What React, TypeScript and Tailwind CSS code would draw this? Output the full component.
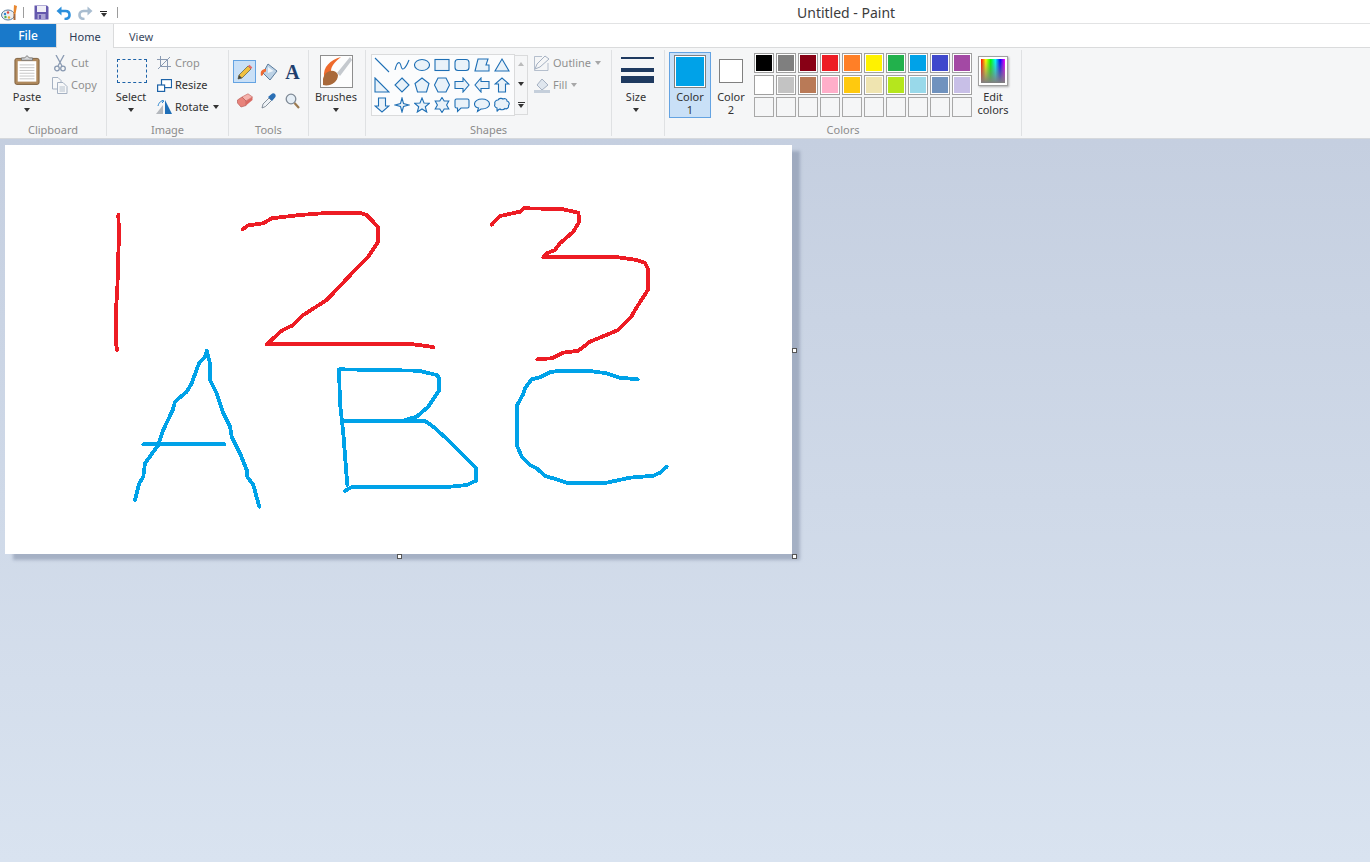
import type { ReactNode } from 'react'

const RED_STROKES = [
  '118.3,215 119,233 117.3,290 115.7,313 115.7,343 117.3,350',
  '242.7,229.3 248.3,225.3 263.3,223.3 271.7,218.3 300,215 330,212.7 360,212.7 366.7,215 378.3,227.3 378.3,241.7 368.3,256.7 356.7,268.3 326.7,300 303.3,315 293.3,325 281.7,330.7 266.7,344.3 413.3,344.3 433.3,347',
  '491.7,224.7 500,216 520,211.7 524,208.3 561.7,209 578.3,212.7 579.3,221.7 573.3,231.7 560,243.3 555,250 546.7,253.3 543.3,257.3 618.3,257.3 636.7,260 645,262.7 648.3,270 648.3,289.3 635,310 631.7,316 618.3,330 590,341.7 578.3,350.7 563.3,352.7 551.7,358.3 537.3,359.3',
]

const BLUE_STROKES = [
  '206.7,351 205,356.7 199,363.3 191.7,383.3 186.7,391.7 175,401.7 172.7,410 163.3,430 158.3,445 145,463.3 143.3,476.7 139.3,483.3 135,500',
  '206.7,351 210,363.3 210,380 216.7,393.3 223.3,413.3 230,426.7 231.7,436.7 240,453.3 246.7,470 247.3,476.7 253.3,485 259.3,506.7',
  '143.3,444.3 224.3,444.3',
  '347.3,485 343.3,433.3 340,403.3 339,369.3 418.3,370.7 436.7,375 439.3,378.3 439.3,390 428.3,406.7 416.7,416.7 405,420',
  '345,421 425,421 433.3,426.7 450,441.7 463.3,455 476,468.3 476,480.7 466.7,485 450,486.7 352.7,486.7 345,490.7',
  '637.7,379.3 620,377.7 606.7,373.3 590,371 560,370.7 550,372.3 540,377.3 531.7,379.3 525,388.3 522.7,395 517.3,405 516.7,445 521.7,456.7 530,465 536.7,468.3 545,476 556.7,479.3 566.7,482.7 606.7,482.7 630,477.7 653.3,475.7 660,472.7 666.7,466.7',
]

const PALETTE = [
  '#000000', '#7f7f7f', '#880015', '#ed1c24', '#ff7f27', '#fff200', '#22b14c', '#00a2e8', '#3f48cc', '#a349a4',
  '#ffffff', '#c3c3c3', '#b97a57', '#ffaec9', '#ffc90e', '#efe4b0', '#b5e61d', '#99d9ea', '#7092be', '#c8bfe7',
]

// 16x16 outlines for the shapes gallery, in gallery order
const SHAPES: ReactNode[] = [
  <path d="M1 1 L15 15" />,
  <path d="M1 13 C3 4 6 4 7 9 C8 14 11 13 15 3" fill="none" />,
  <ellipse cx="8" cy="8" rx="7.5" ry="5.5" />,
  <rect x="1" y="2.5" width="14" height="11" />,
  <rect x="1" y="2.5" width="14" height="11" rx="3" />,
  <path d="M1 14 L4 2 H14 L12 8 H15 V14 Z" />,
  <path d="M8 2 L15 14 H1 Z" />,
  <path d="M1 1 L15 15 H1 Z" />,
  <path d="M8 1 L15 8 L8 15 L1 8 Z" />,
  <path d="M8 1 L15 6.5 L12.5 15 H3.5 L1 6.5 Z" />,
  <path d="M4 1 H12 L15.5 8 L12 15 H4 L.5 8 Z" />,
  <path d="M1 4.5 H9 V1 L15 8 L9 15 V11.5 H1 Z" />,
  <path d="M15 4.5 H7 V1 L1 8 L7 15 V11.5 H15 Z" />,
  <path d="M4.5 15 V7 H1 L8 1 L15 7 H11.5 V15 Z" />,
  <path d="M4.5 1 V9 H1 L8 15 L15 9 H11.5 V1 Z" />,
  <path d="M8 1 L9.5 6.5 L15 8 L9.5 9.5 L8 15 L6.5 9.5 L1 8 L6.5 6.5 Z" />,
  <path d="M8 1 L10 6 L15.5 6.3 L11.3 9.7 L12.7 15 L8 12 L3.3 15 L4.7 9.7 L.5 6.3 L6 6 Z" />,
  <path d="M8 .5 L10.2 4 L14.8 4 L12.6 8 L14.8 12 L10.2 12 L8 15.5 L5.8 12 L1.2 12 L3.4 8 L1.2 4 L5.8 4 Z" />,
  <path d="M2.5 2 H13.5 Q15 2 15 3.5 V9.5 Q15 11 13.5 11 H7 L3.5 14.5 V11 H2.5 Q1 11 1 9.5 V3.5 Q1 2 2.5 2 Z" />,
  <path d="M8 2 C12 2 15.5 4 15.5 7 C15.5 10 12 12 8 12 L7 12 L3.5 14.5 L4.5 11 C2 10.5 .5 9 .5 7 C.5 4 4 2 8 2 Z" />,
  <path d="M4 3 C5 1 8 1 9 2 C11 1 13 2 13 4 C15 4.5 16 7 14.5 8.5 C15 11 12.5 12.5 11 11.5 C9.5 13 7 13 6 12 C4.5 12.5 4 12.5 3 14.5 L3 11 C1 10.5 0 8.5 1 7 C0 5 2 3 4 3 Z" />,
]

function Arrow({ className = '' }: { className?: string }) {
  return <div className={`w-0 h-0 border-x-[3.5px] border-x-transparent border-t-[4px] border-t-[#333] ${className}`} />
}

function Sep() {
  return <div className="w-px h-[86px] mt-[2px] bg-[#dfe1e3] shrink-0" />
}

function Group({ width, label, children }: { width: string; label?: string; children: ReactNode }) {
  return (
    <div className={`${width} h-[90px] flex flex-col shrink-0`}>
      <div className="h-[75px] flex">{children}</div>
      <div className="h-[14px] text-center leading-[14px] text-[#8c8c8c]">{label}</div>
    </div>
  )
}

function BigButton({ width, label, icon, arrow = true }: { width: string; label: ReactNode; icon: ReactNode; arrow?: boolean }) {
  return (
    <div className={`${width} flex flex-col items-center shrink-0`}>
      <div className="h-[42px] flex justify-center">{icon}</div>
      <div className="leading-[13px] text-center text-[#333]">{label}</div>
      {arrow && <Arrow className="mt-[5px]" />}
    </div>
  )
}

function SmallRow({ icon, label, disabled, arrow }: { icon: ReactNode; label: string; disabled?: boolean; arrow?: boolean }) {
  return (
    <div className="h-[22px] flex items-center">
      <div className="w-[18px] flex justify-center shrink-0">{icon}</div>
      <span className={`ml-[2px] ${disabled ? 'text-[#909090]' : 'text-[#333]'}`}>{label}</span>
      {arrow && <Arrow className={`ml-[4px] ${disabled ? 'opacity-40' : ''}`} />}
    </div>
  )
}

function Swatch({ color }: { color?: string }) {
  return (
    <div className={`w-5 h-5 border ${color ? 'border-[#a0a0a0] p-px bg-white' : 'border-[#a8a8a8] bg-[#f5f6f7]'}`}>
      {color && <div className="w-full h-full" style={{ backgroundColor: color }} />}
    </div>
  )
}

function PasteIcon() {
  return (
    <svg width="26" height="32" viewBox="0 0 28 33" className="mt-[6px]">
      <rect x="1" y="4" width="26" height="28" rx="2" fill="#b08a5e" stroke="#7b5c3a" />
      <rect x="4" y="7" width="20" height="22" fill="#fff" />
      <path d="M6 11 H22 M6 14 H22 M6 17 H22 M6 20 H22 M6 23 H22 M6 26 H22" stroke="#c4c4c4" />
      <path d="M8 6 V3.5 H11.5 L14 1 L16.5 3.5 H20 V6 Z" fill="#d5d7da" stroke="#777" />
    </svg>
  )
}

function ScissorsIcon() {
  return (
    <svg width="12" height="17" viewBox="0 0 12 17" fill="none" stroke="#8a9ab2" strokeWidth="1.3">
      <path d="M2 0 L8 11 M10 0 L4 11" />
      <circle cx="3" cy="13.5" r="2.3" />
      <circle cx="9" cy="13.5" r="2.3" />
    </svg>
  )
}

function CopyIcon() {
  return (
    <svg width="16" height="17" viewBox="0 0 16 17" fill="#f7f8f9" stroke="#a5b1c2">
      <path d="M.5 .5 H6 L9 3.5 V12 H.5 Z" />
      <path d="M5.5 5.5 H11 L15 9.5 V16.5 H5.5 Z" />
      <path d="M7.5 10 H13 M7.5 12 H13 M7.5 14 H13" strokeWidth=".8" />
    </svg>
  )
}

function CropIcon() {
  return (
    <svg width="14" height="14" viewBox="0 0 14 14" fill="none" stroke="#8a9ab2">
      <path d="M3.5 0 V10.5 H14 M0 3.5 H10.5 V14 M1 13 L13 1" />
    </svg>
  )
}

function ResizeIcon() {
  return (
    <svg width="15" height="13" viewBox="0 0 15 13" fill="#fff" stroke="#1d63a8" strokeWidth="1.2">
      <rect x="4.5" y=".6" width="10" height="8" />
      <rect x=".6" y="6" width="7" height="6.4" />
    </svg>
  )
}

function RotateIcon() {
  return (
    <svg width="16" height="14" viewBox="0 0 16 14">
      <path d="M0 14 L7 5 V14 Z" fill="#b4b8bd" />
      <path d="M9 0 L16 14 H9 Z" fill="#1f6fb8" />
      <path d="M2 6 C3 2 5 1 7 1 M5.5 0 L8 1 L6 3" fill="none" stroke="#2c86d0" />
    </svg>
  )
}

function PencilIcon() {
  return (
    <svg width="16" height="16" viewBox="0 0 16 16">
      <path d="M1 15 L2 11 L11 2 L14 5 L5 14 Z" fill="#f0c040" stroke="#6b6b4a" strokeWidth=".8" />
      <path d="M1 15 L2 11 L5 14 Z" fill="#444" />
      <path d="M11 2 L12.5 .7 L15.3 3.5 L14 5 Z" fill="#e86a6a" />
    </svg>
  )
}

function BucketIcon() {
  return (
    <svg width="18" height="18" viewBox="0 0 18 18">
      <path d="M8 1 L17 8 L10 17 L3 10 Z" fill="#bcd2e6" stroke="#5c7c9c" />
      <path d="M8 4 L13.5 8 L8 10 Z" fill="#eef4fa" />
      <path d="M6 6 C2 6 0 8 1 13 L3 12 C3 10 4 9 6 8.5 Z" fill="#ef6a33" />
    </svg>
  )
}

function EraserIcon() {
  return (
    <svg width="16" height="15" viewBox="0 0 16 15">
      <path d="M5 4 L11 .8 L15.5 4 L9 8 Z" fill="#f5b3ad" stroke="#c56b66" strokeWidth=".7" />
      <path d="M5 4 L9 8 V12.5 L4 14 L.5 10 V7 Z" fill="#e8837b" stroke="#b85e5a" strokeWidth=".7" />
      <path d="M9 8 L15.5 4 V7 L9 12.5 Z" fill="#d96a63" />
    </svg>
  )
}

function PickerIcon() {
  return (
    <svg width="15" height="16" viewBox="0 0 15 16">
      <path d="M1 15 L2 11 L8 5 L10.5 7.5 L4.5 13.5 Z" fill="#eef2f6" stroke="#6b7785" strokeWidth=".8" />
      <path d="M7 4 L10 1.5 C11.5 0 13 0 14 1 C15 2.2 15 3.5 13.6 5 L11 8 Z" fill="#2a6fb5" />
    </svg>
  )
}

function MagnifierIcon() {
  return (
    <svg width="15" height="16" viewBox="0 0 15 16" fill="none">
      <circle cx="6" cy="6" r="4.8" fill="#e5eef6" stroke="#7f8a96" strokeWidth="1.3" />
      <path d="M9.5 10 L14 15" stroke="#9c7a50" strokeWidth="2.2" />
    </svg>
  )
}

function BrushesIcon() {
  return (
    <svg width="33" height="33" viewBox="0 0 33 33" className="mt-[7px]">
      <rect x=".5" y=".5" width="32" height="32" fill="#fdfdfd" stroke="#8e8e8e" />
      <path d="M4 22 C3 12 10 5 21 2 C15 7 11 11 11 16 Z" fill="#ee6a2c" />
      <path d="M3 24 C5 15 15 13 18 20 C18 27 10 32 3 30 Z" fill="#a9693a" />
      <path d="M17 18 L30 2 L32 5 L20 21 Z" fill="#c5c9ce" />
    </svg>
  )
}

function ToolCell({ children, active }: { children: ReactNode; active?: boolean }) {
  return (
    <div className={`w-[23px] h-[23px] flex items-center justify-center ${active ? 'bg-[#c9e0f7] border border-[#64a3e2]' : ''}`}>
      {children}
    </div>
  )
}

function QuickAccess() {
  return (
    <div className="flex items-center h-6">
      <svg width="17" height="17" viewBox="0 0 17 17" className="ml-px">
        <ellipse cx="7" cy="11" rx="6.5" ry="5" fill="#e9edf1" stroke="#5a7b9a" />
        <circle cx="4" cy="10" r="1.2" fill="#2f86d0" />
        <circle cx="7" cy="8.5" r="1.2" fill="#e0483c" />
        <circle cx="4.5" cy="13" r="1.2" fill="#50b050" />
        <circle cx="8" cy="13.5" r="1.2" fill="#f0a830" />
        <path d="M13 1 L16 2 L14.5 10 L12.5 10 Z" fill="#e8872f" />
        <path d="M12.5 10 H14.5 V16 H12.5 Z" fill="#a9693a" />
      </svg>
      <div className="w-px h-[11px] bg-[#9c9c9c] ml-[5px]" />
      <svg width="15" height="15" viewBox="0 0 15 15" className="ml-[10px]">
        <path d="M.5 .5 H13 L14.5 2 V14.5 H.5 Z" fill="#6458ad" />
        <rect x="3" y="1" width="9" height="6" fill="#f0eff7" />
        <rect x="3.5" y="9" width="8" height="5.5" fill="#a9a3d3" />
        <rect x="5" y="10" width="2" height="4" fill="#6458ad" />
      </svg>
      <svg width="15" height="15" viewBox="0 0 15 15" className="ml-[7px]" fill="none">
        <path d="M4 6 H9.5 C12.5 6 13.5 8 13.5 10 C13.5 12 12 14 8.5 14" stroke="#2b8fdc" strokeWidth="2.6" />
        <path d="M5.5 1.5 V10.5 L.5 6 Z" fill="#2b8fdc" />
      </svg>
      <svg width="15" height="15" viewBox="0 0 15 15" className="ml-[7px]" fill="none">
        <path d="M11 6 H5.5 C2.5 6 1.5 8 1.5 10 C1.5 12 3 14 6.5 14" stroke="#a9bdd0" strokeWidth="2.6" />
        <path d="M9.5 1.5 V10.5 L14.5 6 Z" fill="#a9bdd0" />
      </svg>
      <div className="ml-[7px] mt-[3px] flex flex-col items-center">
        <div className="w-[7px] h-px bg-[#222] mb-px" />
        <Arrow />
      </div>
      <div className="w-px h-[11px] bg-[#9c9c9c] ml-[10px]" />
    </div>
  )
}

export default function App() {
  return (
    <div className="w-[1370px] h-[862px] overflow-hidden flex flex-col bg-white font-['Noto_Sans',sans-serif] text-[11px] text-[#333]">
      {/* Title bar */}
      <div className="h-6 shrink-0 relative border-b border-[#e2e3e4]">
        <QuickAccess />
        <div className="absolute left-[797px] top-0 h-[24px] leading-[25px] text-[14px] text-[#3c3c3c]">Untitled - Paint</div>
      </div>

      {/* Tabs */}
      <div className="h-6 shrink-0 flex border-b border-[#dadbdc] text-[11px]">
        <div className="w-14 h-[23px] bg-[#1979ca] text-[12px] text-white font-medium flex items-center justify-center">File</div>
        <div className="w-[58px] h-6 pt-[2px] bg-[#f5f6f7] border-x border-[#dadbdc] flex items-center justify-center text-[#2b3a55]">Home</div>
        <div className="w-[54px] h-[23px] pt-[3px] flex items-center justify-center text-[#3c4a60]">View</div>
      </div>

      {/* Ribbon */}
      <div className="h-[91px] shrink-0 bg-[#f5f6f7] border-b border-[#d5d8dc] flex">
        <Group width="w-[106px]" label="Clipboard">
          <BigButton width="w-[52px] ml-px" label="Paste" icon={<PasteIcon />} />
          <div className="pt-[4px] -ml-[2px]">
            <SmallRow icon={<ScissorsIcon />} label="Cut" disabled />
            <SmallRow icon={<CopyIcon />} label="Copy" disabled />
          </div>
        </Group>
        <Sep />
        <Group width="w-[121px]" label="Image">
          <BigButton
            width="w-[48px]"
            label="Select"
            icon={<div className="mt-[11px] ml-[2px] w-[30px] h-[24px] border border-dashed border-[#1d63a8]" />}
          />
          <div className="pt-[4px]">
            <SmallRow icon={<CropIcon />} label="Crop" disabled />
            <SmallRow icon={<ResizeIcon />} label="Resize" />
            <SmallRow icon={<RotateIcon />} label="Rotate" arrow />
          </div>
        </Group>
        <Sep />
        <Group width="w-[79px]" label="Tools">
          <div className="ml-[4px] mt-[12px] grid grid-cols-[23px_23px_23px] auto-rows-[23px] gap-y-[6px] gap-x-px">
            <ToolCell active><PencilIcon /></ToolCell>
            <ToolCell><BucketIcon /></ToolCell>
            <ToolCell><span className="font-['Liberation_Serif',serif] font-bold text-[20px] text-[#1f3f6e] leading-none">A</span></ToolCell>
            <ToolCell><EraserIcon /></ToolCell>
            <ToolCell><PickerIcon /></ToolCell>
            <ToolCell><MagnifierIcon /></ToolCell>
          </div>
        </Group>
        <Sep />
        <Group width="w-[56px]">
          <BigButton width="w-[54px]" label="Brushes" icon={<BrushesIcon />} />
        </Group>
        <Sep />
        <Group width="w-[245px]" label="Shapes">
          <div className="ml-[6px] mt-[7px] h-[60px] flex">
            <div className="w-[142px] h-[60px] bg-[#fbfcfd] outline outline-[#dadbdc] grid grid-cols-[repeat(7,20px)] auto-rows-[20px]">
              {SHAPES.map((shape, i) => (
                <div key={i} className="flex items-center justify-center">
                  <svg width="16" height="16" viewBox="0 0 16 16" fill="#e9f2f9" stroke="#1e6fb5" strokeWidth="1.1">
                    {shape}
                  </svg>
                </div>
              ))}
            </div>
            <div className="w-[13px] h-[60px] ml-px border border-l-0 border-[#dadbdc] flex flex-col items-center justify-between py-[6px]">
              <Arrow className="rotate-180 opacity-30" />
              <Arrow />
              <div className="flex flex-col items-center">
                <div className="w-[7px] h-px bg-[#333] mb-px" />
                <Arrow />
              </div>
            </div>
          </div>
          <div className="ml-[5px] pt-[4px]">
            <SmallRow
              label="Outline"
              disabled
              arrow
              icon={
                <svg width="17" height="16" viewBox="0 0 17 16" fill="none" stroke="#a5b1c2">
                  <path d="M1 14 L3 9 L11 1 L15 4 L6 12 Z" />
                  <path d="M.5 1.5 H8 M.5 1.5 V15.5 H14 V8" strokeWidth=".8" />
                </svg>
              }
            />
            <SmallRow
              label="Fill"
              disabled
              arrow
              icon={
                <svg width="17" height="15" viewBox="0 0 17 15">
                  <path d="M8 1 L14 7 L8 12 L3 7 Z" fill="#dfe6ee" stroke="#a5b1c2" />
                  <rect x="0" y="12" width="16" height="3" fill="#c5cfdb" />
                </svg>
              }
            />
          </div>
        </Group>
        <Sep />
        <Group width="w-[52px]">
          <BigButton
            width="w-[48px]"
            label="Size"
            icon={
              <div className="mt-[9px] ml-[3px] w-[33px] flex flex-col">
                <div className="h-[2px] bg-[#1f3a60]" />
                <div className="h-[4px] mt-[9px] bg-[#1f3a60]" />
                <div className="h-[7px] mt-[4px] bg-[#1f3a60]" />
              </div>
            }
          />
        </Group>
        <Sep />
        <Group width="w-[356px]" label="Colors">
          <div className="ml-[4px] mt-[4px] w-[42px] h-[66px] bg-[#c9e0f7] border border-[#64a3e2] flex flex-col items-center shrink-0">
            <div className="mt-[2px] w-[32px] h-[33px] border border-[#808080] bg-white p-px">
              <div className="w-full h-full bg-[#00a2e8]" />
            </div>
            <div className="mt-[2px] leading-[13px] text-center">Color<br />1</div>
          </div>
          <div className="ml-px mt-[11px] w-[38px] flex flex-col items-center shrink-0">
            <div className="w-6 h-6 border border-[#808080] bg-white" />
            <div className="mt-[7px] leading-[13px] text-center">Color<br />2</div>
          </div>
          <div className="ml-[4px] mt-[5px] grid grid-cols-[repeat(10,20px)] gap-[2px] self-start shrink-0">
            {PALETTE.map((color, i) => <Swatch key={i} color={color} />)}
            {Array.from({ length: 10 }).map((_, i) => <Swatch key={i} />)}
          </div>
          <div className="ml-px mt-[8px] w-[40px] flex flex-col items-center shrink-0">
            <div className="w-[30px] h-[30px] border border-[#a0a0a0] bg-white p-[2px] shadow-[1px_1px_2px_rgba(0,0,0,0.3)]">
              <div className="w-full h-full bg-[linear-gradient(to_bottom,transparent,#808080),linear-gradient(to_right,#ff0000,#ffff00,#00ff00,#00ffff,#0000ff,#ff00ff)]" />
            </div>
            <div className="mt-[4px] leading-[13px] text-center">Edit<br />colors</div>
          </div>
        </Group>
        <Sep />
      </div>

      {/* Workspace */}
      <div className="flex-1 bg-[linear-gradient(to_bottom,#c5cfe0,#d9e3f0)] pl-[5px] pt-[6px]">
        <div className="relative w-[787px] h-[409px] bg-white shadow-[8px_6px_3px_rgba(110,125,150,0.45)]">
          <svg width="787" height="409" viewBox="5 145 787 409" fill="none" strokeWidth="3.8" strokeLinejoin="round" strokeLinecap="round" shapeRendering="crispEdges">
            {RED_STROKES.map((points, i) => <polyline key={i} points={points} stroke="#ed1c24" />)}
            {BLUE_STROKES.map((points, i) => <polyline key={i} points={points} stroke="#00a2e8" />)}
          </svg>
          <div className="absolute left-[787px] top-[203px] w-[5px] h-[5px] bg-white border border-[#555]" />
          <div className="absolute left-[392px] top-[409px] w-[5px] h-[5px] bg-white border border-[#555]" />
          <div className="absolute left-[787px] top-[409px] w-[5px] h-[5px] bg-white border border-[#555]" />
        </div>
      </div>
    </div>
  )
}
